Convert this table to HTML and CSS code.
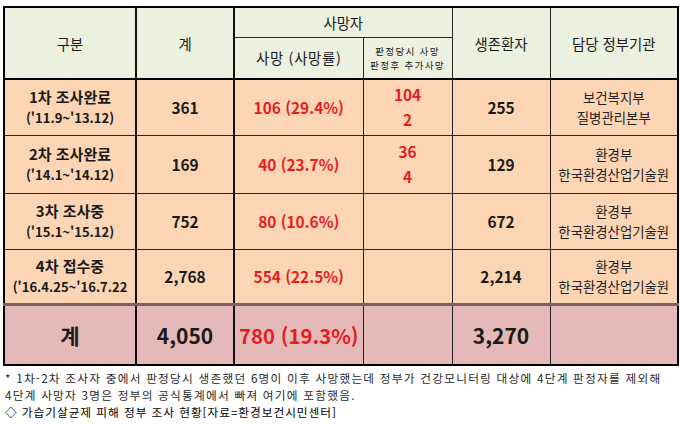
FILE: index.html
```html
<!DOCTYPE html>
<html lang="ko">
<head>
<meta charset="utf-8">
<link rel="stylesheet" href="styles.css">
</head>
<body>
<table class="stats">
  <colgroup>
    <col class="c1"><col class="c2"><col class="c3"><col class="c4"><col class="c5"><col class="c6">
  </colgroup>
  <thead>
    <tr class="hA">
      <th rowspan="2" class="b2">구분</th>
      <th rowspan="2" class="b2">계</th>
      <th colspan="2">사망자</th>
      <th rowspan="2">생존환자</th>
      <th rowspan="2">담당 정부기관</th>
    </tr>
    <tr class="hB">
      <th class="rate">사망 (사망률)</th>
      <th class="small">판정당시 사망<br>판정후 추가사망</th>
    </tr>
  </thead>
  <tbody>
    <tr class="r1">
      <td class="label b2">1차 조사완료<br><span class="date">('11.9~'13.12)</span></td>
      <td class="num b2">361</td>
      <td class="num red">106 (29.4%)</td>
      <td class="num red two">104<br>2</td>
      <td class="num">255</td>
      <td class="org">보건복지부<br>질병관리본부</td>
    </tr>
    <tr class="r2">
      <td class="label b2">2차 조사완료<br><span class="date">('14.1~'14.12)</span></td>
      <td class="num b2">169</td>
      <td class="num red">40 (23.7%)</td>
      <td class="num red two">36<br>4</td>
      <td class="num">129</td>
      <td class="org">환경부<br>한국환경산업기술원</td>
    </tr>
    <tr class="r3">
      <td class="label b2">3차 조사중<br><span class="date">('15.1~'15.12)</span></td>
      <td class="num b2">752</td>
      <td class="num red">80 (10.6%)</td>
      <td></td>
      <td class="num">672</td>
      <td class="org">환경부<br>한국환경산업기술원</td>
    </tr>
    <tr class="r4">
      <td class="label b2">4차 접수중<br><span class="date">('16.4.25~'16.7.22</span></td>
      <td class="num b2">2,768</td>
      <td class="num red">554 (22.5%)</td>
      <td></td>
      <td class="num">2,214</td>
      <td class="org">환경부<br>한국환경산업기술원</td>
    </tr>
    <tr class="total">
      <td class="tlabel b2">계</td>
      <td class="tnum b2">4,050</td>
      <td class="tnum red">780 (19.3%)</td>
      <td></td>
      <td class="tnum">3,270</td>
      <td></td>
    </tr>
  </tbody>
</table>
<div class="notes">
  <p class="note">* 1차-2차 조사자 중에서 판정당시 생존했던 6명이 이후 사망했는데 정부가 건강모니터링 대상에 4단계 판정자를 제외해</p>
  <p class="note">4단계 사망자 3명은 정부의 공식통계에서 빠져 여기에 포함했음.</p>
  <p class="caption">◇ 가습기살균제 피해 정부 조사 현황[자료=환경보건시민센터]</p>
</div>
</body>
</html>
```
FILE: styles.css
```css
html, body {
  margin: 0;
  padding: 0;
  background: #ffffff;
}
body {
  font-family: "Noto Sans CJK KR", "Noto Sans", sans-serif;
  color: #1a1a1a;
  width: 680px;
  height: 424px;
  overflow: hidden;
}
.stats {
  border-collapse: collapse;
  table-layout: fixed;
  width: 674px;
  margin: 6px 0 0 3px;
  border: 2px solid #000;
}
.c1 { width: 132px; }
.c2 { width: 98px; }
.c3 { width: 129px; }
.c4 { width: 89px; }
.c5 { width: 98px; }
.c6 { width: 128px; }

.stats th, .stats td {
  border: 1px solid #262626;
  padding: 0;
  text-align: center;
  vertical-align: middle;
  overflow: visible;
  white-space: nowrap;
}
.stats .b2 { border-right: 2px solid #111; }

thead th {
  background: #ebf0df;
  font-weight: 400;
  font-size: 14.4px;
  color: #1a1a1a;
}
.hA { height: 30px; }
.hB { height: 42px; }
thead tr.hB th { border-bottom: 2px solid #000; }
thead tr.hA th[rowspan] { border-bottom: 2px solid #000; }
thead th.rate { letter-spacing: 0.7px; }
thead th.small {
  font-size: 9.6px;
  line-height: 14px;
  letter-spacing: 1.3px;
}

tbody td { background: #fcd5b5; }
.r1 { height: 56px; }
.r2 { height: 58px; }
.r3 { height: 56px; }
.r4 { height: 55px; }
.r4 td { border-bottom: 3px solid #7d6262; }
.total { height: 61px; }
.total td { background: #e6b9b9; }

.label {
  font-size: 15px;
  font-weight: 700;
  line-height: 20px;
}
.date { font-size: 13px; }
.num {
  font-size: 15.4px;
  font-weight: 700;
}
.two { line-height: 25px; }
.red { color: #e11f1f; }
.org {
  font-size: 13.4px;
  line-height: 20px;
  color: #222;
}
.tlabel {
  font-size: 21px;
  font-weight: 700;
}
.tnum {
  font-size: 21px;
  font-weight: 700;
}
.tnum.red { font-size: 20.4px; }

.notes {
  padding: 3px 0 0 5px;
}
.notes p {
  margin: 0;
  line-height: 17px;
  white-space: nowrap;
}
.note {
  font-size: 11.7px;
  letter-spacing: 1.22px;
  color: #2a2a2a;
}
.caption {
  font-size: 11.7px;
  letter-spacing: 0.95px;
  color: #000;
}
```
